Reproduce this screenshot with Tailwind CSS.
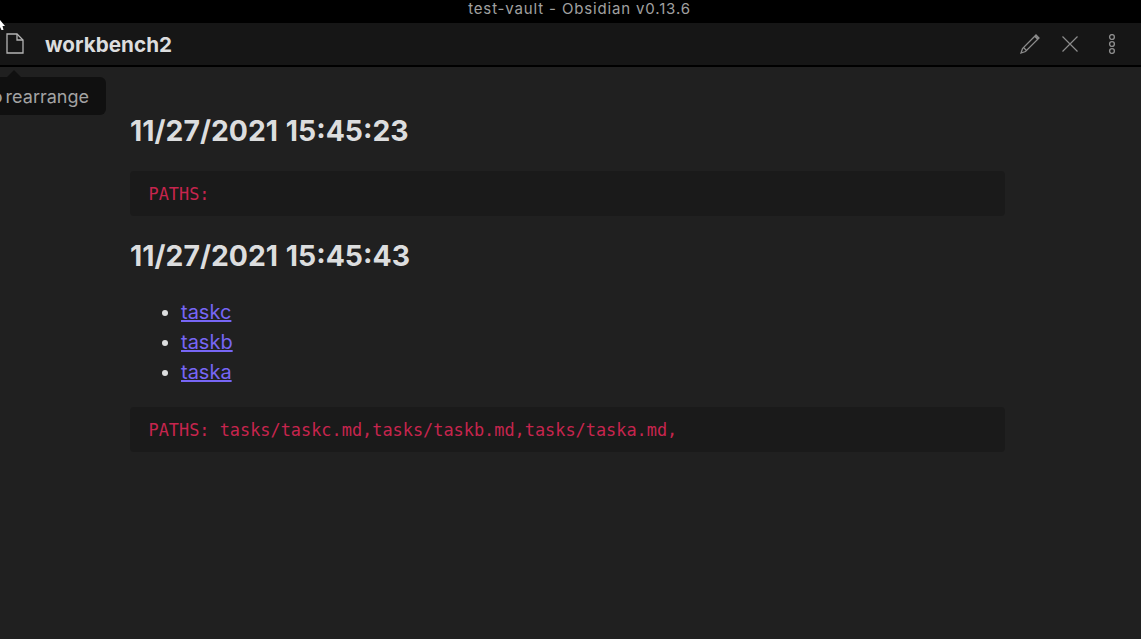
<!DOCTYPE html>
<html>
<head>
<meta charset="utf-8">
<script src="https://cdn.jsdelivr.net/npm/@tailwindcss/browser@4"></script>
</head>
<body class="h-[639px] w-[1141px] overflow-hidden bg-[#202020] font-['Inter',sans-serif] relative">
  <div class="h-[23px] bg-black flex items-start justify-center text-[15px] leading-[18px] tracking-[0.85px] text-[#a0a0a0] pl-[18px]">test-vault - Obsidian v0.13.6</div>
  <header class="h-[44px] bg-[#161616] border-b-2 border-black flex items-center">
    <svg class="ml-[5.5px] mb-[1px]" width="18" height="21" viewBox="0 0 18 21" fill="none" stroke="#b4b4b4" stroke-width="1.3"><path d="M1 1H11L17 7V20H1Z"/><path d="M11 1V7H17"/></svg>
    <div class="ml-[21.5px] pt-[1px] text-[20.7px] font-bold text-[#dcddde]">workbench2</div>
    <div class="ml-auto flex items-center mr-[25px]">
      <svg width="22" height="22" viewBox="0 0 22 22" fill="none" stroke="#8c8c8c" stroke-width="1.3"><path d="M2 20L3.5 15.5L17 2L20 5L6.5 18.5Z"/><path d="M4.5 14.5L7.5 17.5"/><path d="M16 3L19 6" stroke-width="2"/></svg>
      <svg class="ml-[20px]" width="18" height="18" viewBox="0 0 18 18" fill="none" stroke="#8c8c8c" stroke-width="1.2"><path d="M1.5 1.5L16.5 16.5M16.5 1.5L1.5 16.5"/></svg>
      <svg class="ml-[29px]" width="8" height="20" viewBox="0 0 8 20" fill="none" stroke="#8c8c8c" stroke-width="1.4"><circle cx="4" cy="3" r="2.4"/><circle cx="4" cy="10" r="2.4"/><circle cx="4" cy="17" r="2.4"/></svg>
    </div>
  </header>
  <main class="pl-[130px] w-[1005px]">
    <h2 class="pt-[48px] text-[28.4px] leading-[32px] font-bold text-[#dcddde] [word-spacing:1px]">11/27/2021 15:45:23</h2>
    <pre class="mt-[24px] h-[45px] rounded-[4px] bg-[#1a1a1a] px-[18.5px] pt-[12px] font-['DejaVu_Sans_Mono',monospace] text-[16.9px] leading-[22px] text-[#c7254e]">PATHS: </pre>
    <h2 class="mt-[24px] text-[28.4px] leading-[32px] font-bold text-[#dcddde] [word-spacing:1px]">11/27/2021 15:45:43</h2>
    <ul class="mt-[25px] ml-[30px] list-disc text-[20px] leading-[30px] text-[#dcddde] pl-[21px]">
      <li><a class="text-[#7766f5] underline">taskc</a></li>
      <li><a class="text-[#7766f5] underline">taskb</a></li>
      <li><a class="text-[#7766f5] underline">taska</a></li>
    </ul>
    <pre class="mt-[20px] h-[45px] rounded-[4px] bg-[#1a1a1a] px-[18.5px] pt-[12px] font-['DejaVu_Sans_Mono',monospace] text-[16.9px] leading-[22px] text-[#c7254e]">PATHS: tasks/taskc.md,tasks/taskb.md,tasks/taska.md,</pre>
  </main>
  <div class="absolute left-0 top-[77px] h-[38px] w-[106px] rounded-r-[6px] bg-[#101010] flex items-center justify-end pr-[17px] text-[18px] text-[#a3a3a3] overflow-hidden whitespace-nowrap [word-spacing:-2px]">o rearrange</div>
  <div class="absolute left-[7px] top-[70px] w-0 h-0 border-x-[7px] border-x-transparent border-b-[7px] border-b-[#101010]"></div>
  <svg class="absolute left-0 top-[20px]" width="6" height="11" viewBox="0 0 6 11"><path d="M0 0L5 6H2.5L3.5 10H1.5L0 7Z" fill="#fff"/></svg>
</body>
</html>
